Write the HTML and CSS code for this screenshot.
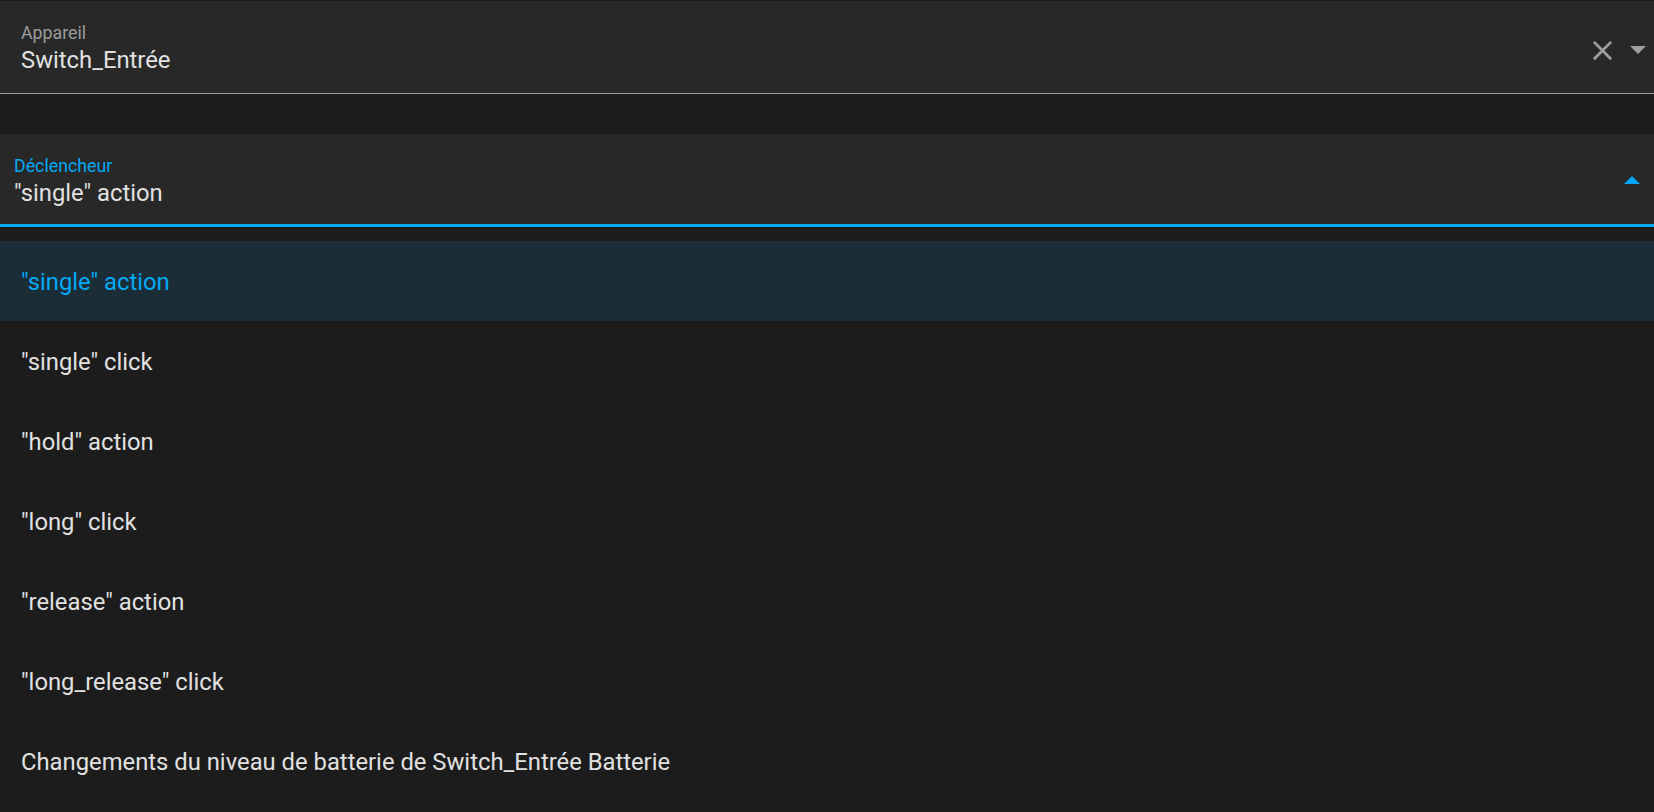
FILE: index.html
```html
<!DOCTYPE html>
<html lang="fr">
<head>
<meta charset="utf-8">
<title>Déclencheur</title>
<link rel="stylesheet" href="styles.css">
</head>
<body>
  <div class="field field-device">
    <div class="field-text">
      <div class="field-label">Appareil</div>
      <div class="field-value">Switch_Entrée</div>
    </div>
    <div class="field-icons field-icons-device">
      <svg class="icon-close" viewBox="0 0 24 24"><path d="M19,6.41L17.59,5L12,10.59L6.41,5L5,6.41L10.59,12L5,17.59L6.41,19L12,13.41L17.59,19L19,17.59L13.41,12L19,6.41Z"/></svg>
      <svg class="icon-arrow" viewBox="0 0 16 8"><polygon points="0,0 16,0 8,8"/></svg>
    </div>
  </div>

  <div class="field field-trigger">
    <div class="field-text">
      <div class="field-label label-active">Déclencheur</div>
      <div class="field-value">"single" action</div>
    </div>
    <div class="field-icons">
      <svg class="icon-arrow icon-arrow-up" viewBox="0 0 16 8"><polygon points="0,8 16,8 8,0"/></svg>
    </div>
  </div>

  <ul class="menu">
    <li class="menu-item selected">"single" action</li>
    <li class="menu-item">"single" click</li>
    <li class="menu-item">"hold" action</li>
    <li class="menu-item">"long" click</li>
    <li class="menu-item">"release" action</li>
    <li class="menu-item">"long_release" click</li>
    <li class="menu-item">Changements du niveau de batterie de Switch_Entrée Batterie</li>
  </ul>
</body>
</html>
```

FILE: styles.css
```css
* {
  box-sizing: border-box;
}

html, body {
  margin: 0;
  padding: 0;
  height: 100%;
  overflow: hidden;
  background: #1c1c1c;
}

body {
  font-family: Roboto, "Liberation Sans", sans-serif;
  color: #e1e1e1;
}

.field {
  display: flex;
  align-items: stretch;
  height: 93px;
  background: #282828;
}

.field-device {
  margin-top: 1px;
  border-bottom: 1px solid #9a9a9a;
  padding: 0 8px 0 21px;
}

.field-trigger {
  margin-top: 40px;
  border-bottom: 3px solid #03a9f4;
  padding: 0 14px 0 14px;
}

.field-text {
  flex: 1;
  display: flex;
  flex-direction: column;
  padding-top: 21.5px;
}

.field-label {
  font-size: 17.8px;
  line-height: 20px;
  color: #9b9b9b;
}

.label-active {
  color: #03a9f4;
}

.field-value {
  margin-top: 3.5px;
  font-size: 23.8px;
  line-height: 28px;
  color: #e1e1e1;
}

.field-icons {
  display: flex;
  align-items: center;
  gap: 11.5px;
}

.field-icons-device {
  padding-top: 6px;
}

.icon-close {
  width: 33px;
  height: 33px;
  fill: #9e9e9e;
}

.icon-arrow {
  width: 16px;
  height: 8px;
  fill: #9e9e9e;
}

.icon-arrow-up {
  fill: #03a9f4;
  margin-top: 1px;
}

.menu {
  list-style: none;
  margin: 14px 0 0 0;
  padding: 0;
}

.menu-item {
  height: 80px;
  display: flex;
  align-items: center;
  padding: 2px 0 0 21px;
  font-size: 23.8px;
  color: #e1e1e1;
  white-space: nowrap;
}

.menu-item.selected {
  background: #1b2d37;
  color: #03a9f4;
}
```
